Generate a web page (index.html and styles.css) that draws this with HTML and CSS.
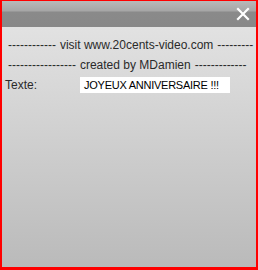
FILE: index.html
```html
<!DOCTYPE html>
<html>
<head>
<meta charset="utf-8">
<link rel="stylesheet" href="styles.css">
</head>
<body>
<div class="frame">
  <div class="titlebar">
    <svg class="close" width="14" height="14" viewBox="0 0 14 14"><path d="M2 2 L12 12 M12 2 L2 12" stroke="#fff" stroke-width="2.2" stroke-linecap="square"/></svg>
  </div>
  <div class="content">
    <div class="line"><span>------------</span><span>visit www.20cents-video.com</span><span>---------</span></div>
    <div class="line"><span>-----------------</span><span>created by MDamien</span><span>-------------</span></div>
    <div class="row">
      <span class="label">Texte:</span>
      <span class="field">JOYEUX ANNIVERSAIRE !!!</span>
    </div>
  </div>
</div>
</body>
</html>
```
FILE: styles.css
```css
html, body { margin: 0; padding: 0; }
body { width: 258px; height: 270px; overflow: hidden; font-family: "Liberation Sans", Arial, sans-serif; }
.frame {
  box-sizing: border-box;
  width: 258px; height: 270px;
  border-style: solid; border-color: #f00;
  border-width: 1px 2px 3px 2px;
  display: flex; flex-direction: column;
  background: linear-gradient(#e6e6e6, #bababa);
}
.titlebar {
  height: 26px;
  flex: none;
  display: flex; justify-content: flex-end; align-items: flex-start;
  background: linear-gradient(#b9b9b9 0px, #a6a6a6 10px, #8a8a8a 11px, #888 26px);
}
.close { margin: 6px 6px 0 0; }
.content {
  flex: 1;
  padding-top: 8px;
  color: #2a2a2a;
  font-size: 12px;
}
.line {
  height: 20px; line-height: 20px;
  display: flex;
  white-space: nowrap;
  padding-left: 6px;
  gap: 4px;
}
.row { height: 20px; display: flex; align-items: center; }
.label { width: 75px; padding-left: 3px; }
.field {
  background: #fff;
  width: 146px; height: 16px; line-height: 16px;
  padding-left: 4px;
  font-size: 11px; color: #000;
  letter-spacing: -0.25px;
  white-space: nowrap; overflow: hidden;
}
```
